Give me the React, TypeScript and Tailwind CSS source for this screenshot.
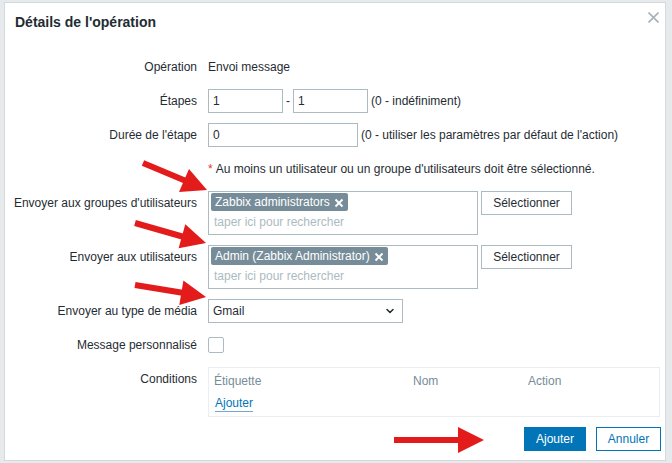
import { ChevronDown } from 'lucide-react';

const font = { fontFamily: '"Liberation Sans", Arial, sans-serif' };

function Chip({ label }: { label: string }) {
  return (
    <span className="inline-flex h-[18px] items-center gap-[4px] rounded-[2px] bg-[#768d99] pl-[4px] pr-[4px] text-white">
      {label}
      <svg width="10" height="10" viewBox="0 0 10 10" className="mt-[1px]">
        <path d="M1.5 1.5 L8.5 8.5 M8.5 1.5 L1.5 8.5" stroke="#fff" strokeWidth="1.9" />
      </svg>
    </span>
  );
}

function MultiSelect({ chip }: { chip: string }) {
  return (
    <div className="flex items-start gap-[3px]">
      <div className="flex h-[44px] w-[270px] flex-col border border-[#acbbc2] p-[1px] pl-[2px]">
        <div>
          <Chip label={chip} />
        </div>
        <div className="flex h-[22px] items-center pl-[3px] text-[#acbbc2]">taper ici pour rechercher</div>
      </div>
      <button className="h-[24px] w-[91px] border border-[#acbbc2] bg-white text-[#1f2c33]">Sélectionner</button>
    </div>
  );
}

function Label({ children, top }: { children: React.ReactNode; top?: boolean }) {
  return (
    <div className={`flex h-[24px] items-center justify-end whitespace-nowrap ${top ? 'self-start' : ''}`}>{children}</div>
  );
}

function Arrows() {
  const red = '#e31b1b';
  return (
    <svg className="pointer-events-none absolute inset-0" width="672" height="463">
      <line x1="143" y1="163" x2="186" y2="181" stroke={red} strokeWidth="6" />
      <polygon points="207,190 179,192 189,169" fill={red} />
      <line x1="135" y1="223" x2="184" y2="237" stroke={red} strokeWidth="6" />
      <polygon points="206,243 178.6,248.2 185.3,224.2" fill={red} />
      <line x1="135" y1="285" x2="184" y2="293" stroke={red} strokeWidth="6" />
      <polygon points="206,297 179.3,305.1 183.4,280.5" fill={red} />
      <line x1="394" y1="440" x2="460" y2="440" stroke={red} strokeWidth="6" />
      <polygon points="484,440 458,427 458,453" fill={red} />
    </svg>
  );
}

export default function App() {
  return (
    <div className="relative h-[463px] w-[672px] overflow-hidden bg-[#e6eaec] pl-[4px] pt-[2px] text-[12px] text-[#1f2c33]" style={font}>
      <div className="relative h-[459px] w-[662px] border border-[#d2dade] bg-white">
        {/* Header */}
        <div className="px-[10px] pt-[11px] text-[14px] font-bold leading-[17px]">Détails de l'opération</div>
        <button className="absolute right-[5px] top-[8px] p-[1px]">
          <svg width="11" height="11" viewBox="0 0 11 11">
            <path d="M0.5 0.5 L10.5 10.5 M10.5 0.5 L0.5 10.5" stroke="#a4b3bb" strokeWidth="1.6" />
          </svg>
        </button>

        {/* Form */}
        <div className="mt-[24px] grid grid-cols-[182px_1fr] gap-x-[11px] gap-y-[10px] pl-[10px] pr-[4px]">
          <Label>Opération</Label>
          <div className="flex h-[24px] items-center">Envoi message</div>

          <Label>Étapes</Label>
          <div className="flex h-[24px] items-center">
            <input className="h-[24px] w-[75px] border border-[#acbbc2] px-[4px] outline-none" defaultValue="1" />
            <span className="mx-[3px]">-</span>
            <input className="h-[24px] w-[75px] border border-[#acbbc2] px-[4px] outline-none" defaultValue="1" />
            <span className="ml-[3px]">(0 - indéfiniment)</span>
          </div>

          <Label>Durée de l'étape</Label>
          <div className="flex h-[24px] items-center">
            <input className="h-[24px] w-[150px] border border-[#acbbc2] px-[4px] outline-none" defaultValue="0" />
            <span className="ml-[3px]">(0 - utiliser les paramètres par défaut de l'action)</span>
          </div>

          <div />
          <div className="flex h-[24px] items-center">
            <span className="mr-[3px] text-[#e33734]">*</span>
            Au moins un utilisateur ou un groupe d'utilisateurs doit être sélectionné.
          </div>

          <Label top>Envoyer aux groupes d'utilisateurs</Label>
          <MultiSelect chip="Zabbix administrators" />

          <Label top>Envoyer aux utilisateurs</Label>
          <MultiSelect chip="Admin (Zabbix Administrator)" />

          <Label>Envoyer au type de média</Label>
          <div>
            <div className="flex h-[24px] w-[195px] items-center justify-between border border-[#acbbc2] pl-[4px] pr-[6px]">
              <span>Gmail</span>
              <ChevronDown size={12} strokeWidth={3} className="text-[#1f2c33]" />
            </div>
          </div>

          <Label>Message personnalisé</Label>
          <div className="flex h-[24px] items-center">
            <div className="h-[16px] w-[16px] rounded-[2px] border border-[#acbbc2]" />
          </div>

          <Label top>Conditions</Label>
          <div className="mr-[1px] h-[50px] border border-[#ebeef0] pl-[5px]">
            <div className="grid h-[26px] grid-cols-[199px_115px_1fr] items-center text-[#768d99]">
              <span>Étiquette</span>
              <span>Nom</span>
              <span>Action</span>
            </div>
            <div className="pl-[1px]">
              <span className="border-b border-[#6fa8d4] pb-[1px] leading-[14px] text-[#0275b8]">Ajouter</span>
            </div>
          </div>
        </div>

        {/* Footer */}
        <div className="mt-[10px] flex justify-end gap-[10px] pr-[4px]">
          <button className="h-[24px] w-[62px] border border-[#0275b8] bg-[#0275b8] text-white">Ajouter</button>
          <button className="h-[24px] w-[65px] border border-[#0275b8] bg-white text-[#0275b8]">Annuler</button>
        </div>
      </div>
      <Arrows />
    </div>
  );
}
